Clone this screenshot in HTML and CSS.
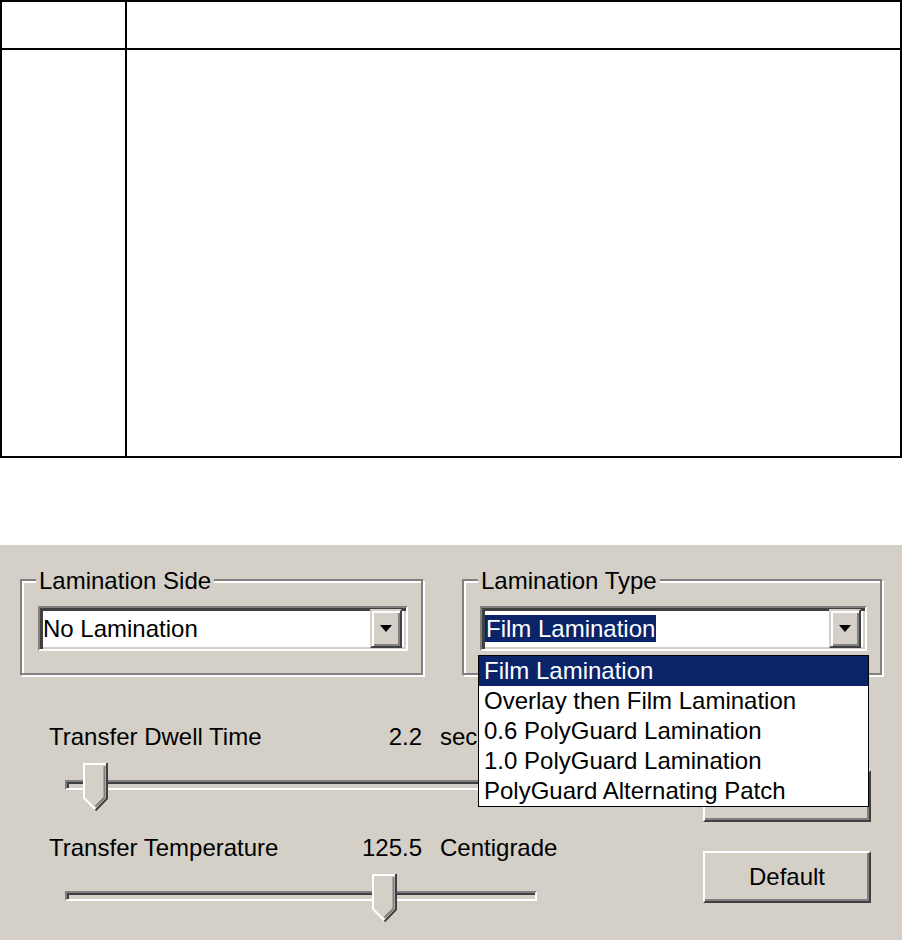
FILE: index.html
```html
<!DOCTYPE html>
<html lang="en">
<head>
    <meta charset="UTF-8">
    <title>Lamination Settings</title>
    <link rel="stylesheet" href="styles.css">
</head>
<body>
    <div class="doc-table">
        <div class="cell cell-head cell-first"></div>
        <div class="cell cell-head"></div>
        <div class="cell cell-first"></div>
        <div class="cell"></div>
    </div>

    <div class="dialog">
        <div class="group-row">
            <div class="group group-side">
                <span class="group-label">Lamination Side</span>
                <div class="combo combo-side">
                    <span class="combo-text">No Lamination</span>
                    <span class="combo-btn"><span class="arrow"></span></span>
                </div>
            </div>
            <div class="group group-type">
                <span class="group-label">Lamination Type</span>
                <div class="combo combo-type">
                    <span class="combo-text"><span class="selected">Film Lamination</span></span>
                    <span class="combo-btn"><span class="arrow"></span></span>
                    <ul class="combo-list">
                        <li class="active">Film Lamination</li>
                        <li>Overlay then Film Lamination</li>
                        <li>0.6 PolyGuard Lamination</li>
                        <li>1.0 PolyGuard Lamination</li>
                        <li>PolyGuard Alternating Patch</li>
                    </ul>
                </div>
            </div>
        </div>

        <div class="lower">
            <div class="sliders">
                <div class="slider-head">
                    <span>Transfer Dwell Time</span>
                    <span class="value">2.2</span>
                    <span class="unit">sec</span>
                </div>
                <div class="slider">
                    <div class="track"></div>
                    <svg class="thumb" style="left: 18px" width="25" height="48" viewBox="0 0 25 48">
                        <polygon points="0,0 25,0 25,35 12.5,48 0,35" fill="#d4d0c8"/>
                        <polyline points="1,35.5 1,1 23,1" fill="none" stroke="#fff" stroke-width="2"/>
                        <polyline points="1,35 12.5,46.5" fill="none" stroke="#fff" stroke-width="2"/>
                        <polyline points="24,0 24,35.5 12.5,47.5" fill="none" stroke="#404040" stroke-width="2"/>
                        <polyline points="21.5,3 21.5,34.5 12.5,43.5" fill="none" stroke="#808080" stroke-width="2"/>
                    </svg>
                </div>
                <div class="slider-head">
                    <span>Transfer Temperature</span>
                    <span class="value">125.5</span>
                    <span class="unit">Centigrade</span>
                </div>
                <div class="slider">
                    <div class="track"></div>
                    <svg class="thumb" style="left: 307px" width="25" height="48" viewBox="0 0 25 48">
                        <polygon points="0,0 25,0 25,35 12.5,48 0,35" fill="#d4d0c8"/>
                        <polyline points="1,35.5 1,1 23,1" fill="none" stroke="#fff" stroke-width="2"/>
                        <polyline points="1,35 12.5,46.5" fill="none" stroke="#fff" stroke-width="2"/>
                        <polyline points="24,0 24,35.5 12.5,47.5" fill="none" stroke="#404040" stroke-width="2"/>
                        <polyline points="21.5,3 21.5,34.5 12.5,43.5" fill="none" stroke="#808080" stroke-width="2"/>
                    </svg>
                </div>
            </div>
            <div class="buttons">
                <button class="btn">&nbsp;</button>
                <button class="btn">Default</button>
            </div>
        </div>
    </div>
</body>
</html>
```

FILE: styles.css
```css
* {
    box-sizing: border-box;
}

body {
    margin: 0;
    font-family: "Liberation Sans", Arial, sans-serif;
    font-size: 24px;
    line-height: 26px;
    color: #000;
    background-color: #fff;
}

/* empty document table */
.doc-table {
    width: 902px;
    height: 458px;
    border: 2px solid #000;
    display: grid;
    grid-template-columns: 125px 1fr;
    grid-template-rows: 48px 1fr;
}

.cell-first {
    border-right: 2px solid #000;
}

.cell-head {
    border-bottom: 2px solid #000;
}

/* dialog screenshot */
.dialog {
    margin-top: 87px;
    height: 395px;
    background-color: #d4d0c8;
    padding: 34px 0 0 20px;
}

.group-row {
    display: flex;
    gap: 39px;
}

.group {
    position: relative;
    height: 96px;
    border: 2px solid #808080;
    box-shadow: inset 2px 2px 0 #fff, 2px 2px 0 #fff;
    padding: 25px 0 0 16px;
}

.group-side {
    width: 403px;
}

.group-type {
    width: 420px;
}

.group-label {
    position: absolute;
    top: -13px;
    left: 14px;
    padding: 0 3px;
    background-color: #d4d0c8;
    white-space: nowrap;
}

.combo {
    position: relative;
    display: flex;
    height: 45px;
    background-color: #fff;
    border: 2px solid;
    border-color: #808080 #fff #fff #808080;
    box-shadow: inset 3px 3px 0 #404040, inset -2px -2px 0 #d4d0c8;
    padding: 1px 4px 1px 3px;
}

.combo-side {
    width: 370px;
}

.combo-type {
    width: 387px;
}

.combo-text {
    flex: 1;
    display: flex;
    align-items: center;
    white-space: nowrap;
    overflow: hidden;
}

.selected {
    background-color: #0a246a;
    color: #fff;
    padding: 1px 1px 0;
}

.combo-btn {
    width: 32px;
    display: flex;
    align-items: center;
    justify-content: center;
    background-color: #d4d0c8;
    border: 2px solid;
    border-color: #d4d0c8 #404040 #404040 #d4d0c8;
    box-shadow: inset 2px 2px 0 #fff, inset -2px -2px 0 #808080;
}

.arrow {
    width: 0;
    height: 0;
    border-left: 6px solid transparent;
    border-right: 6px solid transparent;
    border-top: 7px solid #000;
}

.combo-list {
    position: absolute;
    top: 47px;
    left: -4px;
    width: 391px;
    margin: 0;
    padding: 0;
    list-style: none;
    background-color: #fff;
    border: 1px solid #000;
    z-index: 10;
}

.combo-list li {
    height: 30px;
    line-height: 30px;
    padding-left: 5px;
    white-space: nowrap;
}

.combo-list li.active {
    background-color: #0a246a;
    color: #fff;
}

.lower {
    display: flex;
    margin: 49px 0 0 29px;
}

.sliders {
    width: 488px;
}

.slider-head {
    display: grid;
    grid-template-columns: 313px 60px auto;
    white-space: nowrap;
}

.value {
    text-align: right;
}

.unit {
    margin-left: 18px;
}

.slider {
    position: relative;
    width: 472px;
    height: 48px;
    padding-top: 17px;
    margin: 13px 0 24px 16px;
}

.track {
    height: 10px;
    border: 2px solid;
    border-color: #808080 #fff #fff #808080;
    box-shadow: inset 2px 2px 0 #404040;
}

.thumb {
    position: absolute;
    top: 0;
}

.buttons {
    display: flex;
    flex-direction: column;
    gap: 29px;
    margin-left: 166px;
    padding-top: 46px;
}

.btn {
    width: 168px;
    height: 52px;
    padding: 0;
    font: inherit;
    color: #000;
    background-color: #d4d0c8;
    border: 2px solid;
    border-color: #fff #404040 #404040 #fff;
    box-shadow: inset -2px -2px 0 #808080;
}
```
